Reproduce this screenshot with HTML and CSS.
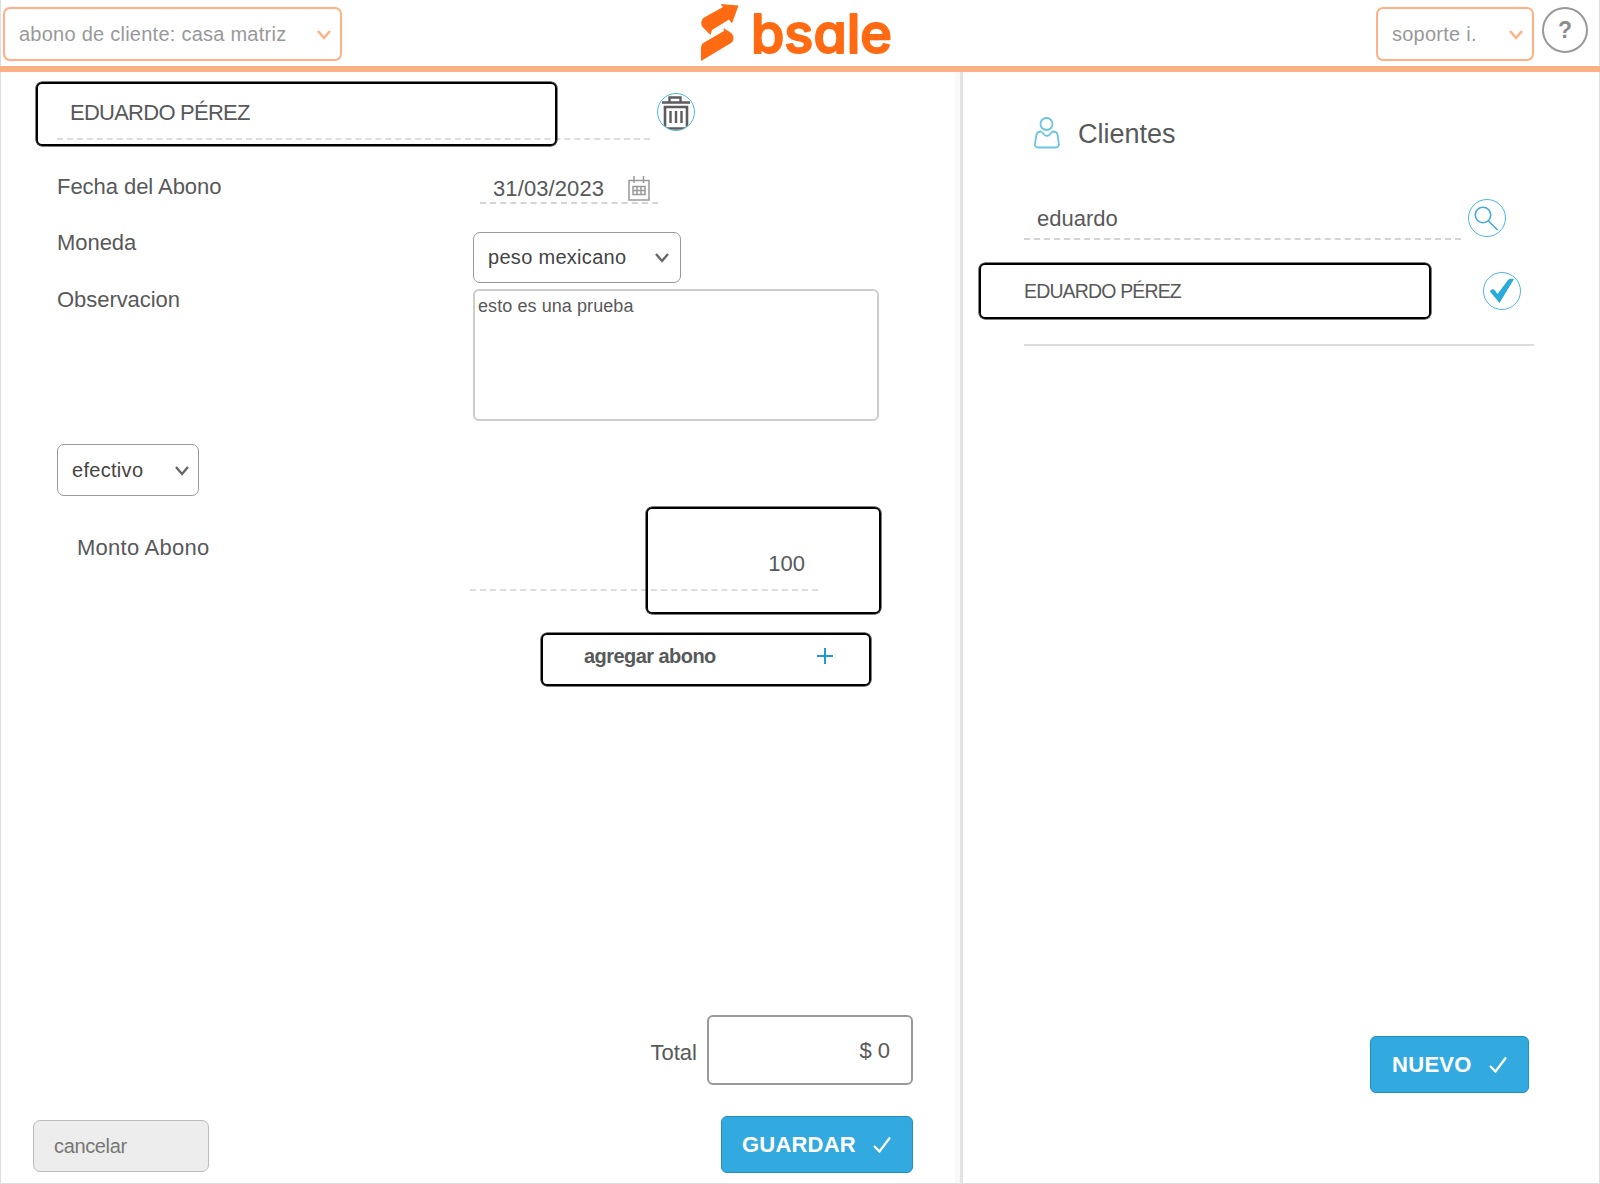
FILE: index.html
```html
<!DOCTYPE html>
<html lang="es">
<head>
  <meta charset="UTF-8">
  <meta name="viewport" content="width=device-width, initial-scale=1.0">
  <title>Abono de cliente</title>
  <link rel="stylesheet" href="styles.css">
</head>
<body>
  <div class="page">
    <header class="header">
      <div class="header-select sucursal">
        <span>abono de cliente: casa matriz</span>
        <svg class="chevron" viewBox="0 0 16 12"><path d="M2 2l6 7 6-7"/></svg>
      </div>
      <svg class="logo" viewBox="0 0 200 65">
        <path class="logo-mark" d="M20.500 4L38.500 5.500 32 23.500 29 19.500 12 30 10.500 35 2.500 27C0 23 1.500 19 5 17L23 7z"/>
        <path class="logo-mark" d="M23.500 28L30.500 32.500C34.500 36 34.500 40.500 31 43L1 61V48C1 45 2.500 43.300 5 42L24 31z"/>
        <text class="logo-text" x="51" y="52.500" textLength="141" lengthAdjust="spacingAndGlyphs">bsale</text>
      </svg>
      <div class="header-right">
        <div class="header-select usuario">
          <span>soporte i.</span>
          <svg class="chevron" viewBox="0 0 16 12"><path d="M2 2l6 7 6-7"/></svg>
        </div>
        <div class="help">?</div>
      </div>
    </header>

    <div class="content">
      <main class="abono">
        <div class="cliente-row">
          <div class="cliente-field">EDUARDO PÉREZ</div>
          <div class="circle">
            <svg class="trash" viewBox="0 0 38 38">
              <path d="M5 9.500h28M12.500 9V4.500h11v5" stroke-width="2.400"/>
              <path d="M8 14h22v21.500h-22z" stroke-width="2.600"/>
              <path d="M13.500 18v12M19 18v12M24.500 18v12" stroke-width="2.400"/>
            </svg>
          </div>
          <div class="mark mark-cliente"></div>
        </div>

        <div class="row">
          <div class="label">Fecha del Abono</div>
          <div class="date-field">
            <span>31/03/2023</span>
            <svg class="calendar" viewBox="0 0 24 26">
              <path d="M2 4.500h20V24H2zM7 0v7M16.500 0v7"/>
              <path d="M6 10.500h12v8H6zM6 14.500h12M10 10.500v8M14 10.500v8"/>
            </svg>
          </div>
        </div>
        <div class="row row-moneda">
          <div class="label">Moneda</div>
          <div class="select moneda">
            <span>peso mexicano</span>
            <svg class="chevron" viewBox="0 0 16 12"><path d="M2 2l6 7 6-7"/></svg>
          </div>
        </div>
        <div class="row row-obs">
          <div class="label">Observacion</div>
          <div class="textarea">esto es una prueba</div>
        </div>

        <div class="select pago">
          <span>efectivo</span>
          <svg class="chevron" viewBox="0 0 16 12"><path d="M2 2l6 7 6-7"/></svg>
        </div>

        <div class="monto-row">
          <div class="label">Monto Abono</div>
          <div class="monto-field">100</div>
          <div class="mark mark-monto"></div>
        </div>

        <div class="agregar">
          <span>agregar abono</span>
          <svg class="plus" viewBox="0 0 16 16"><path d="M8 0v16M0 8h16"/></svg>
        </div>

        <div class="bottom">
          <div class="total-row">
            <span class="total-label">Total</span>
            <div class="total">$ 0</div>
          </div>
          <div class="actions">
            <div class="cancel">cancelar</div>
            <div class="button guardar">
              <span>GUARDAR</span>
              <svg class="tick" viewBox="0 0 18 18"><path d="M1 10l5.500 5.500L17 1.500"/></svg>
            </div>
          </div>
        </div>
      </main>

      <div class="divider"></div>

      <aside class="clientes">
        <div class="title">
          <svg class="person" viewBox="0 0 26 32">
            <circle cx="12.500" cy="7" r="6"/>
            <path d="M7 14.500C4 14.500 3 15.500 2.500 17.500L1 26.500C.5 29 2 30.500 4 30.500H21.500C24 30.500 25.300 29 24.800 26.500L23.500 17.500C23 15.500 22 14.500 18.500 14.500 17 15 16 19 13 19 10 19 9 15 7 14.500z"/>
          </svg>
          <span>Clientes</span>
        </div>
        <div class="search-row">
          <div class="search-field">eduardo</div>
          <div class="circle">
            <svg class="lens" viewBox="0 0 38 38"><circle cx="15" cy="16" r="7.700"/><path d="M20.500 22l9 9"/></svg>
          </div>
        </div>
        <div class="result">
          <span>EDUARDO PÉREZ</span>
          <div class="circle">
            <svg class="check" viewBox="0 0 38 38"><path d="M7 19.500C8 17 10.500 16.500 12 18.500L14.500 22 25 8C26.500 6.500 28.500 6.500 31 7L16.500 31z"/></svg>
          </div>
          <div class="mark mark-result"></div>
        </div>
        <div class="button nuevo">
          <span>NUEVO</span>
          <svg class="tick" viewBox="0 0 18 18"><path d="M1 10l5.500 5.500L17 1.500"/></svg>
        </div>
      </aside>
    </div>
  </div>
</body>
</html>
```
FILE: styles.css
```css
* {
  box-sizing: border-box;
}
body {
  margin: 0;
  background-color: #fff;
  color: #58595a;
  font-family: "Liberation Sans", Arial, sans-serif;
  font-size: 22px;
}
svg {
  display: block;
  fill: none;
}
.page {
  display: flex;
  flex-direction: column;
  height: 1184px;
  border: 1px solid #dedede;
  border-top: none;
}

/* header */
.header {
  display: flex;
  align-items: flex-start;
  height: 72px;
  margin: 0 -1px;
  padding: 7px 12px 0 3px;
  border-bottom: 6px solid #ffb084;
}
.header-select {
  display: flex;
  justify-content: space-between;
  align-items: center;
  height: 54px;
  padding: 0 8px 0 14px;
  border: 2px solid #ffb084;
  border-radius: 7px;
  color: #999;
  font-size: 20px;
  letter-spacing: 0.25px;
}
.header-select .chevron {
  stroke: #ffb084;
}
.sucursal {
  width: 339px;
}
.usuario {
  width: 158px;
}
.chevron {
  width: 16px;
  height: 12px;
  margin-top: 1px;
  stroke: #666;
  stroke-width: 2.4;
}
.logo {
  width: 200px;
  height: 65px;
  margin: -7px 0 0 358px;
  overflow: visible;
}
.logo-mark {
  fill: #ff6a13;
}
.logo-text {
  fill: #ff6a13;
  stroke: #ff6a13;
  stroke-width: 2;
  stroke-linejoin: round;
  font-family: Inter, sans-serif;
  font-size: 54px;
  font-weight: 500;
  font-feature-settings: "cv11";
}
.header-right {
  display: flex;
  gap: 8px;
  margin-left: auto;
}
.help {
  width: 46px;
  height: 46px;
  border: 2px solid #999;
  border-radius: 50%;
  color: #8c8c8c;
  font-size: 23px;
  font-weight: bold;
  line-height: 43px;
  text-align: center;
}

/* layout */
.content {
  display: flex;
  flex: 1;
}
.abono {
  display: flex;
  flex-direction: column;
  width: 954px;
  padding: 16px 0 10px 56px;
}
.divider {
  width: 8px;
  background-color: #f9f9fa;
  border-right: 3px solid #e3e3e4;
}
.clientes {
  display: flex;
  flex-direction: column;
  flex: 1;
  padding: 45px 64px 90px 61px;
}

/* black frames drawn over the fields */
.mark {
  position: absolute;
  border: 2.5px solid #000;
  border-radius: 6px;
  box-shadow: 0 0 0 0.5px #000;
}
.circle {
  width: 38px;
  height: 38px;
  border: 1.5px solid #4db8de;
  border-radius: 50%;
  overflow: hidden;
}
.circle svg {
  width: 38px;
  height: 38px;
  margin: -1px;
}

/* form */
.cliente-row {
  position: relative;
  display: flex;
  gap: 7px;
  height: 77px;
}
.cliente-field {
  width: 593px;
  height: 52px;
  padding-left: 13px;
  border-bottom: 2px dashed #ddd;
  line-height: 50px;
  letter-spacing: -0.75px;
}
.cliente-row .circle {
  margin-top: 5px;
}
.mark-cliente {
  left: -21px;
  top: -6px;
  width: 521px;
  height: 64px;
}
.trash {
  stroke: #5c5c5c;
}
.row {
  display: flex;
  height: 56px;
}
.row-moneda {
  height: 57px;
}
.row-obs {
  height: 166px;
}
.label {
  width: 416px;
  line-height: 44px;
  letter-spacing: -0.05px;
}
.date-field {
  display: flex;
  justify-content: space-between;
  width: 178px;
  height: 31px;
  margin: 8px 0 0 7px;
  padding: 0 7px 0 13px;
  border-bottom: 2px dashed #d4d4d4;
  line-height: 32px;
  letter-spacing: 0.1px;
}
.calendar {
  width: 24px;
  height: 26px;
  margin-top: 3px;
  stroke: #999;
  stroke-width: 1.5;
}
.select {
  display: flex;
  flex-shrink: 0;
  justify-content: space-between;
  align-items: center;
  height: 52px;
  padding: 0 10px 0 14px;
  border: 1.5px solid #999;
  border-radius: 7px;
  color: #444;
  font-size: 20px;
  letter-spacing: 0.3px;
}
.moneda {
  width: 208px;
  height: 51px;
  margin-top: 11px;
}
.textarea {
  width: 406px;
  height: 132px;
  margin-top: 11px;
  padding: 4px 3px;
  border: 2px solid #ccc;
  border-radius: 6px;
  font-size: 18px;
  line-height: 22px;
  letter-spacing: 0.08px;
}
.pago {
  width: 142px;
  padding-right: 8px;
}
.monto-row {
  position: relative;
  display: flex;
  height: 136px;
  padding: 30px 0 0 20px;
}
.monto-row .label {
  width: 393px;
  letter-spacing: 0.25px;
}
.monto-field {
  width: 348px;
  height: 65px;
  padding-right: 13px;
  border-bottom: 2px dashed #ddd;
  line-height: 76px;
  text-align: right;
}
.mark-monto {
  left: 589px;
  top: 11px;
  width: 235px;
  height: 107px;
}
.agregar {
  display: flex;
  justify-content: space-between;
  width: 330px;
  height: 53px;
  margin: 1px 0 0 484px;
  padding: 0 36px 0 41px;
  border: 2.5px solid #000;
  border-radius: 6px;
  box-shadow: 0 0 0 0.5px #000;
  font-size: 20px;
  font-weight: bold;
  letter-spacing: -0.55px;
  line-height: 42px;
}
.plus {
  width: 16px;
  height: 16px;
  margin-top: 13px;
  stroke: #1e9bd1;
  stroke-width: 2;
}

/* totals and buttons */
.bottom {
  margin-top: auto;
  margin-right: 42px;
}
.total-row {
  display: flex;
  justify-content: flex-end;
  align-items: center;
  gap: 10px;
}
.total-label {
  padding-top: 6px;
}
.total {
  width: 206px;
  height: 70px;
  padding-right: 21px;
  border: 2px solid #999;
  border-radius: 6px;
  line-height: 67px;
  text-align: right;
}
.actions {
  display: flex;
  justify-content: space-between;
  align-items: center;
  margin: 31px 0 0 -24px;
}
.cancel {
  width: 176px;
  height: 52px;
  margin-top: 3px;
  padding-left: 20px;
  border: 1.5px solid #bbb;
  border-radius: 7px;
  background-color: #ededed;
  color: #777;
  font-size: 20px;
  letter-spacing: -0.35px;
  line-height: 50px;
}
.button {
  display: flex;
  justify-content: space-between;
  align-items: center;
  height: 57px;
  padding: 0 21px 0 20px;
  border: 1px solid #1f8fc4;
  border-radius: 6px;
  background-color: #33aadf;
  color: #fff;
  font-weight: bold;
}
.guardar {
  width: 192px;
  letter-spacing: 0.2px;
}
.nuevo {
  width: 159px;
  margin: auto 6px 0 auto;
  padding-left: 21px;
  letter-spacing: 0.3px;
}
.tick {
  width: 18px;
  height: 18px;
  stroke: #fff;
  stroke-width: 2.2;
}

/* clientes */
.title {
  display: flex;
  height: 78px;
  padding-left: 10px;
  gap: 18px;
  font-size: 27px;
  line-height: 35px;
}
.person {
  width: 26px;
  height: 32px;
  stroke: #6cc3e6;
  stroke-width: 1.8;
}
.search-row {
  display: flex;
  gap: 7px;
  height: 62px;
}
.search-field {
  width: 437px;
  height: 45px;
  padding-left: 13px;
  border-bottom: 2px dashed #d4d4d4;
  line-height: 47px;
}
.search-row .circle {
  margin-top: 4px;
}
.lens {
  stroke: #45a9d6;
  stroke-width: 1.6;
}
.result {
  position: relative;
  display: flex;
  justify-content: space-between;
  width: 510px;
  height: 89px;
  padding: 15px 13px 0 0;
  border-bottom: 2px solid #ddd;
  font-size: 19.5px;
  letter-spacing: -0.85px;
  line-height: 38px;
}
.mark-result {
  left: -45px;
  top: 6px;
  width: 452px;
  height: 56px;
}
.check {
  fill: #29abd9;
}
```
